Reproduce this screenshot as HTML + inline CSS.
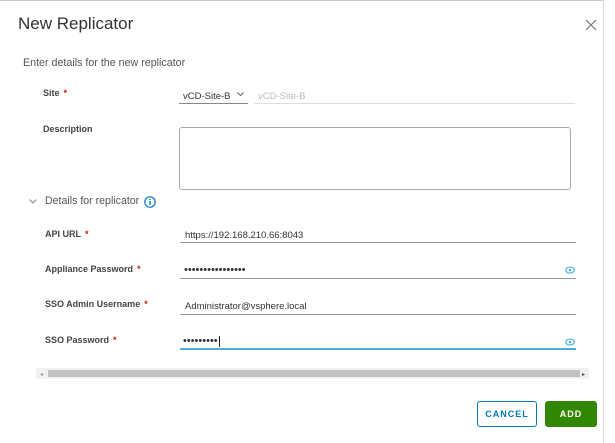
<!DOCTYPE html>
<html><head><style>
*{margin:0;padding:0;box-sizing:border-box}
body{width:615px;height:443px;background:#fff;font-family:"Liberation Sans",sans-serif;position:relative;overflow:hidden;color:#333}
.a{position:absolute;white-space:nowrap}
.lbl{font-size:9px;font-weight:bold;color:#444}
.req{color:#c92100;margin-left:4px}
.ul{position:absolute;height:1px;background:#9a9a9a}
.val{font-size:9.5px;color:#333}
.dots{font-size:11px;letter-spacing:0;color:#333;line-height:12px}
</style></head><body>
<div class="a" style="left:0;top:0;width:603px;height:1px;background:#ccc"></div>
<div class="a" style="left:603px;top:0;width:1px;height:443px;background:#ddd"></div>
<div class="a" style="left:18px;top:14px;font-size:17px;color:#333">New Replicator</div>
<svg class="a" style="left:585px;top:19px" width="12" height="12" viewBox="0 0 12 12"><path d="M1 1L11 11M11 1L1 11" stroke="#777" stroke-width="1.2"/></svg>
<div class="a" style="left:23px;top:57px;font-size:10.7px;color:#555">Enter details for the new replicator</div>

<div class="a lbl" style="left:43px;top:88px">Site<span class="req">*</span></div>
<div class="a val" style="left:183px;top:91px">vCD-Site-B</div>
<svg class="a" style="left:237px;top:92px" width="7" height="5" viewBox="0 0 7 5"><path d="M0.5 0.5L3.5 3.5L6.5 0.5" stroke="#666" fill="none"/></svg>
<div class="ul" style="left:179px;top:103px;width:69px;background:#888"></div>
<div class="a" style="left:258px;top:91px;font-size:9.5px;color:#bbb">vCD-Site-B</div>
<div class="ul" style="left:254px;top:103px;width:321px;background:#ddd"></div>

<div class="a lbl" style="left:43px;top:124px">Description</div>
<div class="a" style="left:179px;top:127px;width:392px;height:63px;border:1px solid #aaa;border-radius:3px"></div>

<svg class="a" style="left:29px;top:199px" width="8" height="5" viewBox="0 0 8 5"><path d="M0.5 0.5L4 4L7.5 0.5" stroke="#888" fill="none"/></svg>
<div class="a" style="left:45px;top:195px;font-size:10.6px;color:#555">Details for replicator</div>
<svg class="a" style="left:144px;top:196px" width="12" height="12" viewBox="0 0 12 12"><circle cx="6" cy="6" r="5.2" stroke="#0079b8" stroke-width="1.2" fill="none"/><rect x="5.4" y="5" width="1.3" height="4" fill="#0079b8"/><circle cx="6" cy="3.4" r="0.8" fill="#0079b8"/></svg>

<div class="a lbl" style="left:45px;top:229px">API URL<span class="req">*</span></div>
<div class="a val" style="left:185px;top:230px">https://192.168.210.66:8043</div>
<div class="ul" style="left:180px;top:242px;width:396px"></div>

<div class="a lbl" style="left:45px;top:264px">Appliance Password<span class="req">*</span></div>
<div class="a dots" style="left:184px;top:264px">••••••••••••••••</div>
<svg class="a" style="left:565px;top:266px" width="10" height="8" viewBox="0 0 10 8"><ellipse cx="5" cy="4" rx="4.3" ry="3" stroke="#49afd9" fill="none" stroke-width="1.1"/><circle cx="5" cy="4" r="1.3" fill="#49afd9"/></svg>
<div class="ul" style="left:180px;top:278px;width:396px"></div>

<div class="a lbl" style="left:45px;top:299px">SSO Admin Username<span class="req">*</span></div>
<div class="a val" style="left:185px;top:301px">Administrator@vsphere.local</div>
<div class="ul" style="left:180px;top:314px;width:396px"></div>

<div class="a lbl" style="left:45px;top:335px">SSO Password<span class="req">*</span></div>
<div class="a dots" style="left:183px;top:335px">•••••••••<span style="display:inline-block;width:1px;height:11px;background:#222;vertical-align:middle;margin-left:1px"></span></div>
<svg class="a" style="left:565px;top:338px" width="10" height="8" viewBox="0 0 10 8"><ellipse cx="5" cy="4" rx="4.3" ry="3" stroke="#49afd9" fill="none" stroke-width="1.1"/><circle cx="5" cy="4" r="1.3" fill="#49afd9"/></svg>
<div class="ul" style="left:180px;top:348px;width:396px;height:2px;background:#49afd9"></div>

<div class="a" style="left:36px;top:368px;width:553px;height:11px;background:#f1f1f1"></div>
<div class="a" style="left:48px;top:370px;width:532px;height:7px;background:#c1c1c1"></div>
<div class="a" style="left:40px;top:371px;font-size:6px;color:#999">◂</div>
<div class="a" style="left:582px;top:371px;font-size:6px;color:#444">▸</div>

<div class="a" style="left:477px;top:401px;width:60px;height:26px;border:1px solid #0079b8;border-radius:3px;font-size:9px;font-weight:bold;color:#0079b8;text-align:center;line-height:24px;letter-spacing:1px">CANCEL</div>
<div class="a" style="left:545px;top:401px;width:52px;height:26px;background:#318700;border-radius:3px;font-size:9px;font-weight:bold;color:#fff;text-align:center;line-height:26px;letter-spacing:1px">ADD</div>
</body></html>
